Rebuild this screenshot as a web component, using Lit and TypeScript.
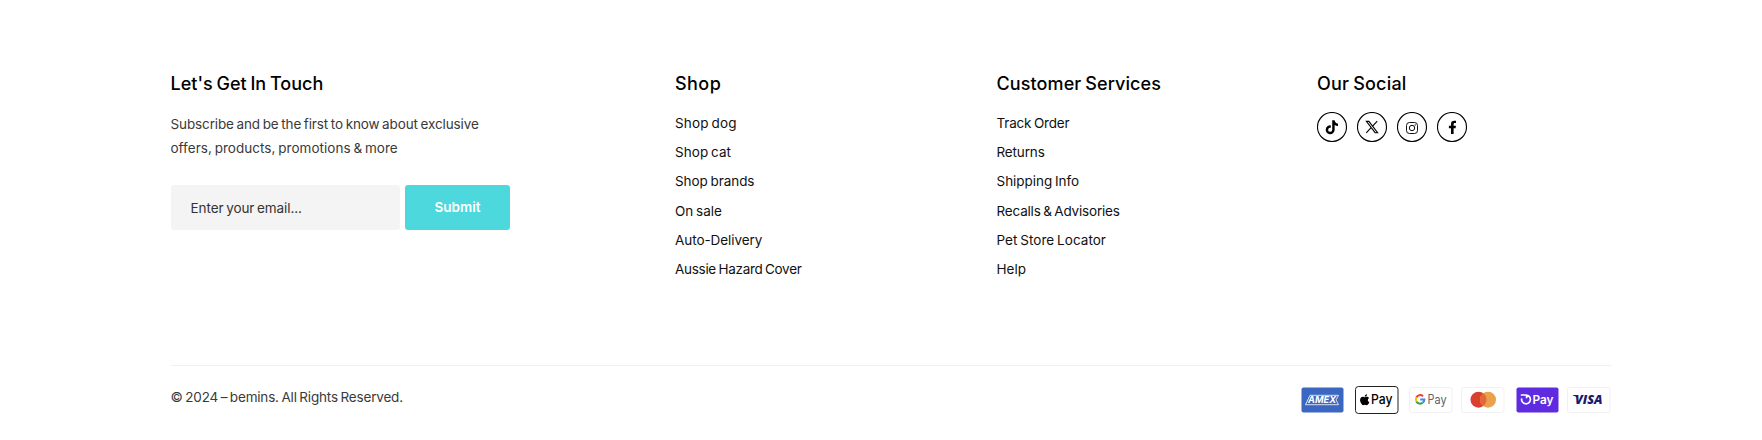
import { LitElement, html, svg, css } from "lit";
import { customElement } from "lit/decorators.js";
import { styleMap } from "lit/directives/style-map.js";

/** A label and its letter tracking in px. */
type Label = [text: string, tracking: number];

const label = ([text, tracking]: Label) =>
  html`<span style=${styleMap({ letterSpacing: `${tracking}px` })}>${text}</span>`;

const shop: Label[] = [
  ["Shop dog", 0.16],
  ["Shop cat", 0.05],
  ["Shop brands", -0.06],
  ["On sale", 0],
  ["Auto-Delivery", -0.06],
  ["Aussie Hazard Cover", -0.29],
];

const services: Label[] = [
  ["Track Order", -0.18],
  ["Returns", -0.15],
  ["Shipping Info", -0.03],
  ["Recalls & Advisories", -0.19],
  ["Pet Store Locator", 0.04],
  ["Help", 0],
];

const socials = [
  {
    name: "TikTok",
    art: svg`<path fill="#000" transform="translate(8.7 8.2) scale(.0275)" d="M448 209.900a210.100 210.100 0 0 1-122.800-39.300v178.800a162.600 162.600 0 1 1-140.200-161.100v89.900a74.600 74.600 0 1 0 52.200 71.200V0h88a121.200 121.200 0 0 0 1.900 22.200 122.200 122.200 0 0 0 53.900 80.200 121.400 121.400 0 0 0 67 20.100z"/>`,
  },
  {
    name: "X",
    art: svg`<path fill="none" stroke="#000" stroke-width="1.100" d="M9.400 9.400h2.500l8.700 11.300h-2.500zM20.200 9.200l-5 5.500M9.300 20.900l5.200-5.700"/>`,
  },
  {
    name: "Instagram",
    art: svg`<g fill="none" stroke="#111" stroke-width="1"><rect x="9.500" y="10.500" width="11" height="11" rx="3"/><circle cx="15" cy="16" r="2.700"/></g><circle cx="18.200" cy="12.900" r=".7" fill="#111"/>`,
  },
  {
    name: "Facebook",
    art: svg`<path fill="#000" transform="translate(11.300 8.700) scale(.026)" d="M279.140 288l14.220-92.660h-88.910v-60.130c0-25.350 12.420-50.060 52.240-50.060h40.420V6.260S260.430 0 225.360 0c-73.220 0-121.080 44.380-121.080 124.720v70.620H22.890V288h81.390v224h100.170V288z"/>`,
  },
];

const amex = svg`<rect x=".5" y="1.500" width="42" height="25" rx="2" fill="#3b67c0"/>
  <path fill="#3b67c0" stroke="#fff" stroke-width=".8" d="M9 9.300H37.500L35 13.900L37.500 18.700H4.500L9 9.300z"/>
  <text x="21" y="17.300" text-anchor="middle" textLength="28" lengthAdjust="spacingAndGlyphs" font-family="Inter, sans-serif" font-weight="700" font-style="italic" font-size="9.500" fill="#fff">AMEX</text>`;
const apple = svg`<rect x=".5" y=".5" width="42.500" height="27" rx="3" fill="#fff" stroke="#222"/>
  <path fill="#000" transform="translate(5 7.400) scale(.0245)" d="M318.700 268.700c-.2-36.700 16.400-64.400 50-84.800-18.800-26.900-47.200-41.700-84.700-44.600-35.500-2.800-74.300 20.700-88.500 20.700-15 0-49.400-19.700-76.400-19.700C63.300 141.200 4 184.800 4 273.500q0 39.300 14.400 81.200c12.800 36.700 59 126.700 107.200 125.200 25.200-.6 43-17.900 75.800-17.900 31.800 0 48.300 17.900 76.400 17.900 48.600-.7 90.400-82.500 102.600-119.300-65.200-30.700-61.700-90-61.700-91.900zm-56.600-164.200c27.300-32.400 24.800-61.900 24-72.500-24.100 1.400-52 16.400-67.900 34.900-17.500 19.800-27.800 44.300-25.600 71.900 26.100 2 49.900-11.400 69.500-34.300z"/>
  <text x="16" y="18" textLength="21.500" lengthAdjust="spacingAndGlyphs" font-family="Inter, sans-serif" font-weight="500" font-size="13" fill="#000">Pay</text>`;
const google = svg`<rect x=".5" y="1.500" width="42.500" height="25" rx="2.500" fill="#fff" stroke="#f1f1f3"/>
  <g fill="none" stroke-width="2"><path stroke="#ea4335" d="M7.300 11.500A4.300 4.300 0 0 1 14 10.200"/><path stroke="#fbbc04" d="M7.300 15.400A4.300 4.300 0 0 1 7.300 11.500"/><path stroke="#34a853" d="M13.900 16.600A4.300 4.300 0 0 1 7.300 15.400"/><path stroke="#4285f4" d="M11.200 13.500H15.400A4.200 4.200 0 0 1 13.900 16.600"/></g>
  <text x="18.500" y="17.800" textLength="19" lengthAdjust="spacingAndGlyphs" font-family="Inter, sans-serif" font-size="12.500" fill="#5f6368">Pay</text>`;
const mastercard = svg`<rect x=".5" y="1.500" width="42.500" height="25" rx="2.500" fill="#fff" stroke="#f1f1f3"/>
  <circle cx="17.500" cy="13.700" r="8" fill="#d9402f"/><circle cx="27" cy="13.700" r="8" fill="#eba14b"/>
  <path fill="#e2683a" d="M22.250 7.260a8 8 0 0 1 0 12.880a8 8 0 0 1 0-12.880z"/>`;
const shopPay = svg`<rect x=".5" y="1.500" width="42" height="25" rx="2" fill="#5f2be0"/>
  <path fill="none" stroke="#fff" stroke-width="1.700" d="M4.800 9H10A4.400 4.400 0 1 1 5.700 12.400M10.600 9V12.200"/>
  <text x="16.500" y="17.700" textLength="21" lengthAdjust="spacingAndGlyphs" font-family="Inter, sans-serif" font-weight="600" font-size="12" fill="#fff">Pay</text>`;
const visa = svg`<rect x=".5" y="1.500" width="42.500" height="25" rx="2.500" fill="#fff" stroke="#f1f1f3"/>
  <path fill="#1b1a6b" d="M5.800 9h4.500l.8 4.500C10.200 11.300 8.200 10 5.800 9.500z"/>
  <text x="8" y="17.900" textLength="27.500" lengthAdjust="spacingAndGlyphs" font-family="Open Sans, sans-serif" font-weight="800" font-style="italic" font-size="12.500" fill="#1b1a6b">VISA</text>`;

const payments = [
  { name: "American Express", art: amex, gap: 10 },
  { name: "Apple Pay", art: apple, gap: 10 },
  { name: "Google Pay", art: google, gap: 8 },
  { name: "Mastercard", art: mastercard, gap: 11 },
  { name: "Shop Pay", art: shopPay, gap: 7 },
  { name: "Visa", art: visa, gap: 0 },
];

@customElement("app-root")
export class AppRoot extends LitElement {
  static styles = css`
    :host { display: block; height: 440px; overflow: hidden; background: #fff; box-sizing: border-box;
      padding: 70px 151px 0 170.5px; color: #111;
      font-family: Inter, "Liberation Sans", sans-serif; font-size: 13.5px; word-spacing: -1px; }
    .columns { display: grid; grid-template-columns: 504.5px 321.5px 320.5px 294px; height: 295px; }
    h2 { margin: 0; font-size: 18px; line-height: 28px; font-weight: 460; color: #000; }
    ul { list-style: none; margin: 0; padding: 0; }
    .links { margin-top: 10.7px; }
    .links li { height: 29.3px; line-height: 29.3px; }
    .intro { margin: 13.5px 0 0; line-height: 24px; color: #3a3a3a; white-space: nowrap; }
    .line { display: block; }
    .form { display: flex; gap: 5px; margin-top: 25.5px; }
    .field { box-sizing: border-box; width: 229.5px; height: 45px; padding: 1px 20px 0 20px; border-radius: 3px;
      background: #f4f4f4; color: #333; line-height: 45px; }
    .submit { width: 105px; height: 45px; padding: 0 0 1px; border: 0; border-radius: 3px; background: #4dd8de;
      color: #fff; font: 600 13.5px Inter, sans-serif; }
    .social { display: flex; gap: 10px; margin-top: 14px; }
    .social li { width: 30px; height: 30px; }
    svg { display: block; }
    .bottom { display: flex; justify-content: space-between; border-top: 1px solid #f0f0f1; }
    .copy { margin: 19px 0 0; line-height: 24px; color: #3a3a3a; }
    .payments { display: flex; margin-top: 20px; }
  `;

  render() {
    return html`
      <footer>
        <div class="columns">
          <section>
            <h2>${label(["Let's Get In Touch", 0])}</h2>
            <p class="intro">
              <span class="line">${label(["Subscribe and be the first to know about exclusive", -0.12])}</span>
              <span class="line">${label(["offers, products, promotions & more", 0.03])}</span>
            </p>
            <div class="form">
              <div class="field">${label(["Enter your email...", -0.08])}</div>
              <button class="submit">Submit</button>
            </div>
          </section>
          <section>
            <h2>${label(["Shop", 0.45])}</h2>
            <ul class="links">${shop.map((l) => html`<li>${label(l)}</li>`)}</ul>
          </section>
          <section>
            <h2>${label(["Customer Services", 0.1])}</h2>
            <ul class="links">${services.map((l) => html`<li>${label(l)}</li>`)}</ul>
          </section>
          <section>
            <h2>${label(["Our Social", 0.2])}</h2>
            <ul class="social">
              ${socials.map(
                (s) => html`<li><svg width="30" height="30" viewBox="0 0 30 30" role="img" aria-label=${s.name}>
                  <circle cx="15" cy="15" r="14.5" fill="#fff" stroke="#000" stroke-width="1.1" />${s.art}</svg></li>`
              )}
            </ul>
          </section>
        </div>
        <div class="bottom">
          <p class="copy">${label(["© 2024 – bemins. All Rights Reserved.", -0.18])}</p>
          <ul class="payments">
            ${payments.map(
              (p) => html`<li style=${styleMap({ marginRight: `${p.gap}px` })}>
                <svg width="44" height="28" viewBox="0 0 44 28" role="img" aria-label=${p.name}>${p.art}</svg></li>`
            )}
          </ul>
        </div>
      </footer>
    `;
  }
}
